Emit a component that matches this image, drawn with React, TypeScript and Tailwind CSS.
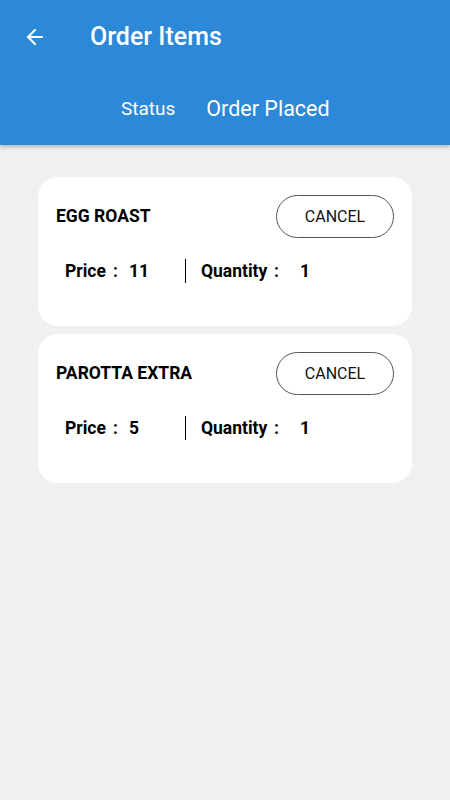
import React from "react";
import { ArrowLeft } from "lucide-react";

interface Item {
  name: string;
  price: number;
  quantity: number;
}

const items: Item[] = [
  { name: "EGG ROAST", price: 11, quantity: 1 },
  { name: "PAROTTA EXTRA", price: 5, quantity: 1 },
];

const ItemCard: React.FC<{ item: Item }> = ({ item }) => {
  return (
    <div className="bg-white rounded-[20px] h-[149px] px-[18px] pt-[18px]">
      <div className="flex items-center justify-between">
        <span className="text-[17.5px] font-bold text-black">{item.name}</span>
        <button className="w-[118px] h-[43px] rounded-full border border-[#555] text-[16px] text-[#111]">
          CANCEL
        </button>
      </div>
      <div className="flex items-center mt-[21px] h-[24px] text-[17.5px] font-bold text-black">
        <span className="ml-[9px] w-[48px]">Price</span>
        <span className="w-[16px]">:</span>
        <span className="w-[56px]">{item.price}</span>
        <div className="w-px h-[24px] bg-black" />
        <span className="ml-[15px] w-[73px]">Quantity</span>
        <span className="w-[26px]">:</span>
        <span>{item.quantity}</span>
      </div>
    </div>
  );
};

export default function App() {
  return (
    <div
      className="w-[450px] h-[800px] bg-[#f0f0f0]"
      style={{ fontFamily: "Roboto, 'Noto Sans', sans-serif" }}
    >
      <div className="bg-[#2b89d7] h-[145px] shadow-[0_2px_4px_rgba(0,0,0,0.25)] text-white">
        <div className="flex items-center h-[72px] pt-[1px]">
          <ArrowLeft className="ml-[23px]" size={24} strokeWidth={2.2} />
          <h1 className="ml-[43px] text-[25px] font-medium">Order Items</h1>
        </div>
        <div className="flex items-center h-[72px] pt-[2px]">
          <span className="ml-[121px] text-[19px]">Status</span>
          <span className="ml-[31px] text-[21.5px]">Order Placed</span>
        </div>
      </div>
      <div className="flex flex-col gap-[8px] px-[38px] pt-[32px]">
        {items.map((item, idx) => (
          <ItemCard key={idx} item={item} />
        ))}
      </div>
    </div>
  );
}
